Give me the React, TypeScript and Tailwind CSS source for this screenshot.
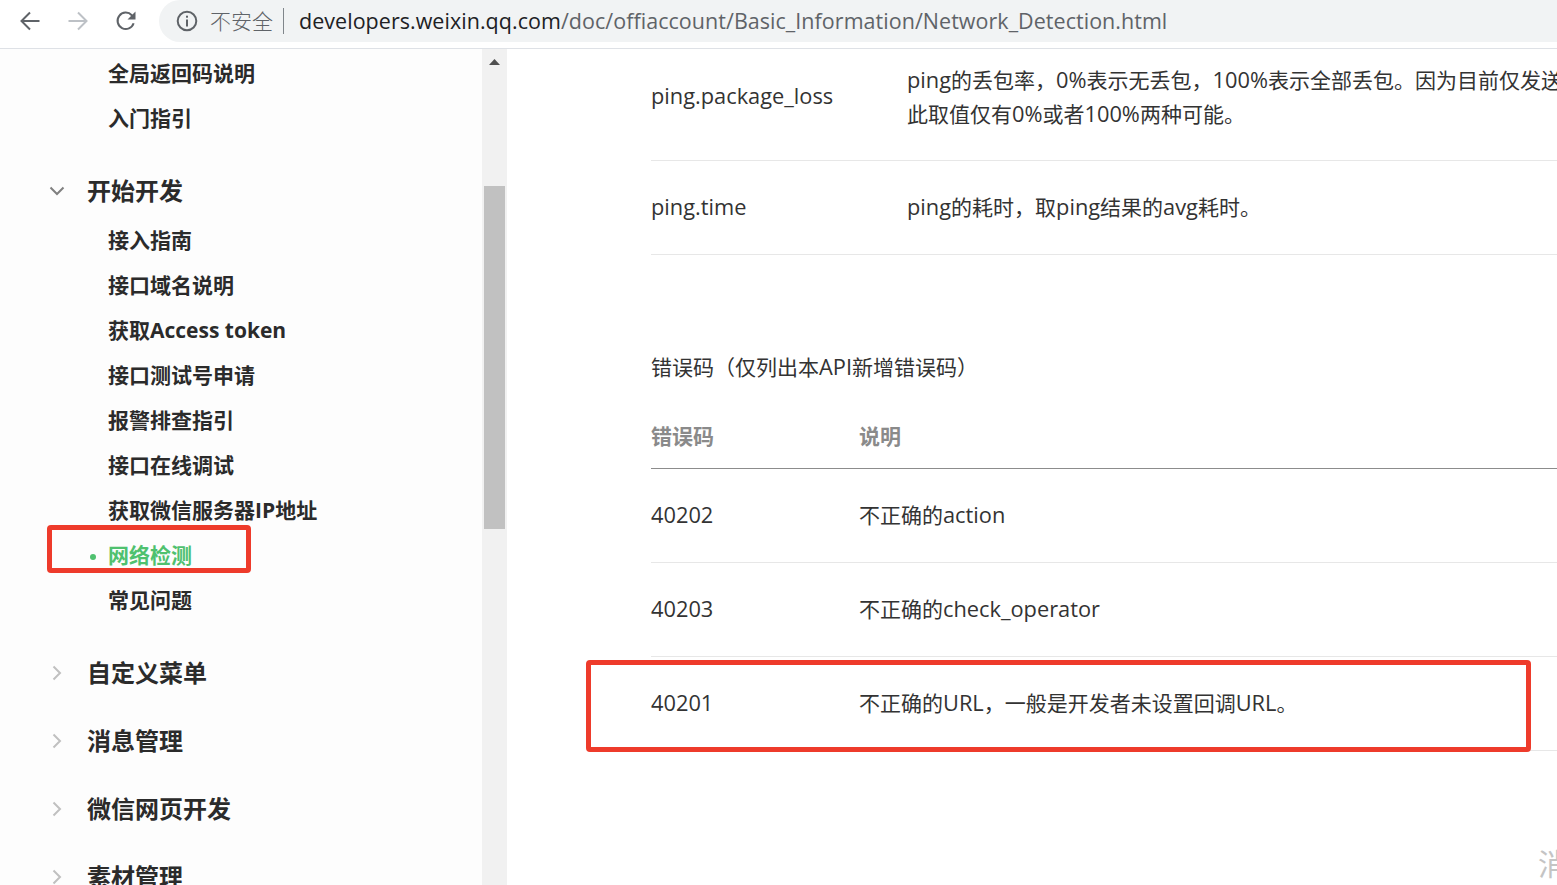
import { Fragment } from "react";

const latin = "font-['Open_Sans','Noto_Sans_CJK_SC',sans-serif]";

const topItems = ["全局返回码说明", "入门指引"];
const devItems = [
  "接入指南",
  "接口域名说明",
  "获取Access token",
  "接口测试号申请",
  "报警排查指引",
  "接口在线调试",
  "获取微信服务器IP地址",
];
const groups = ["自定义菜单", "消息管理", "微信网页开发", "素材管理"];

const errorRows = [
  { code: "40202", text: "不正确的action" },
  { code: "40203", text: "不正确的check_operator" },
  { code: "40201", text: "不正确的URL，一般是开发者未设置回调URL。" },
];

// the Latin runs sit a little larger than the CJK ones in the reference
function Mixed({ text }: { text: string }) {
  const parts = text.split(/([A-Za-z0-9_.%]+)/);
  return (
    <>
      {parts.map((p, i) =>
        i % 2 === 1 ? (
          <span key={i} className="text-[21.8px]">
            {p}
          </span>
        ) : (
          <Fragment key={i}>{p}</Fragment>
        ),
      )}
    </>
  );
}

function ToolbarIcons() {
  return (
    <div className="flex w-[159px] shrink-0 items-center">
      <svg width="24" height="24" viewBox="0 0 24 24" fill="none" className="ml-[18px] text-[#5f6368]">
        <path d="M21.5 12H3.5M12 3.5 3.5 12l8.5 8.5" stroke="currentColor" strokeWidth="2" />
      </svg>
      <svg width="24" height="24" viewBox="0 0 24 24" fill="none" className="ml-[24px] text-[#bdc1c6]">
        <path d="M2.5 12h18M12 3.5l8.5 8.5-8.5 8.5" stroke="currentColor" strokeWidth="2" />
      </svg>
      <svg width="24" height="24" viewBox="0 0 24 24" fill="none" className="ml-[24px] text-[#5f6368]">
        <path d="M19.6 14.2A8.2 8.2 0 1 1 17.8 6.2L20 8.4" stroke="currentColor" strokeWidth="2" />
        <path d="M21.5 2.5v8h-8z" fill="currentColor" />
      </svg>
    </div>
  );
}

function AddressBar() {
  return (
    <div className="flex h-[42px] flex-1 items-center rounded-l-[21px] bg-[#f1f3f4] pl-[16px]">
      <svg width="24" height="24" viewBox="0 0 24 24" fill="none" className="shrink-0 text-[#5f6368]">
        <circle cx="12" cy="12" r="9.3" stroke="currentColor" strokeWidth="2" />
        <rect x="11" y="10.5" width="2" height="7" fill="currentColor" />
        <rect x="11" y="6.7" width="2" height="2" fill="currentColor" />
      </svg>
      <span className="ml-[11px] font-['Noto_Sans_CJK_SC',sans-serif] text-[21px] font-light text-[#5f6368]">不安全</span>
      <span className="ml-[10px] h-[26px] w-px bg-[#80868b]" />
      <span className="ml-[15px] whitespace-nowrap font-['Open_Sans',sans-serif] text-[21.47px] tracking-[0.05px] text-[#202124]">
        developers.weixin.qq.com<span className="text-[#5f6368]">/doc/offiaccount/Basic_Information/Network_Detection.html</span>
      </span>
    </div>
  );
}

function Chevron({ open }: { open?: boolean }) {
  return (
    <svg width="18" height="18" viewBox="0 0 18 18" fill="none" className={`shrink-0 ${open ? "text-[#808080]" : "text-[#c0c0c0]"}`}>
      {open ? (
        <path d="M2.5 5.5 9 12l6.5-6.5" stroke="currentColor" strokeWidth="2" />
      ) : (
        <path d="M5.5 2.5 12 9l-6.5 6.5" stroke="currentColor" strokeWidth="2" />
      )}
    </svg>
  );
}

function SideItem({ label, active }: { label: string; active?: boolean }) {
  return (
    <div
      className={`relative flex h-[45px] items-center pl-[108px] text-[21px] font-bold ${
        active ? "text-[#4fc16f]" : "text-[#2b2b2b]"
      }`}
    >
      {active && <span className="absolute left-[90px] top-[21px] h-[6px] w-[6px] rounded-full bg-[#4fc16f]" />}
      {label}
    </div>
  );
}

function GroupTitle({ label, open }: { label: string; open?: boolean }) {
  return (
    <div className="flex h-[68px] items-center pl-[48px] text-[24px] font-bold text-[#2b2b2b]">
      <Chevron open={open} />
      <span className="ml-[21px]">{label}</span>
    </div>
  );
}

function Sidebar() {
  return (
    <aside className={`flex h-full w-[507px] shrink-0 ${latin}`}>
      <div className="w-[482px] overflow-hidden bg-[#fdfdfd] pt-[2px]">
        {topItems.map((t) => (
          <SideItem key={t} label={t} />
        ))}
        <div className="mt-[16px]">
          <GroupTitle label="开始开发" open />
        </div>
        <div className="-mt-[7px] mb-[16px]">
          {devItems.map((t) => (
            <SideItem key={t} label={t} />
          ))}
          <SideItem label="网络检测" active />
          <SideItem label="常见问题" />
        </div>
        {groups.map((g) => (
          <GroupTitle key={g} label={g} />
        ))}
      </div>
      <div className="flex w-[25px] flex-col bg-[#f1f1f1] px-[2px]">
        <svg width="21" height="12" viewBox="0 0 21 12" className="mt-[6px]">
          <path d="M5 10 10.5 4 16 10z" fill="#505050" />
        </svg>
        <div className="mt-[119px] h-[343px] bg-[#c1c1c1]" />
      </div>
    </aside>
  );
}

function Content() {
  return (
    <main className={`relative min-w-0 flex-1 overflow-hidden bg-white pl-[144px] text-[21px] text-[#333333] ${latin}`}>
      {/* first table, its top is scrolled away */}
      <div className="flex h-[112px] items-center border-b border-[#e7e7e7] pb-[16px] whitespace-nowrap">
        <div className="w-[256px] shrink-0">
          <Mixed text="ping.package_loss" />
        </div>
        <div className="leading-[33px]">
          <p>
            <Mixed text="ping的丢包率，0%表示无丢包，100%表示全部丢包。因为目前仅发送一个包，" />
          </p>
          <p>
            <Mixed text="此取值仅有0%或者100%两种可能。" />
          </p>
        </div>
      </div>
      <div className="flex h-[94px] items-center border-b border-[#e7e7e7] whitespace-nowrap">
        <div className="w-[256px] shrink-0">
          <Mixed text="ping.time" />
        </div>
        <div>
          <Mixed text="ping的耗时，取ping结果的avg耗时。" />
        </div>
      </div>

      <p className="mt-[95px] h-[33px] leading-[33px] whitespace-nowrap">
        <Mixed text="错误码（仅列出本API新增错误码）" />
      </p>

      <div className="mt-[21px] flex h-[65px] items-center border-b border-[#8c8c8c] pt-[1px] font-bold text-[#8a8a8a]">
        <div className="w-[208px] shrink-0">错误码</div>
        <div>说明</div>
      </div>
      {errorRows.map((r) => (
        <div key={r.code} className="flex h-[94px] items-center border-b border-[#e7e7e7] whitespace-nowrap">
          <div className="w-[208px] shrink-0">
            <Mixed text={r.code} />
          </div>
          <div>
            <Mixed text={r.text} />
          </div>
        </div>
      ))}

      <span className="absolute left-[1031px] top-[800px] text-[30px] leading-[30px] text-[#c4c4c4]">消</span>
    </main>
  );
}

export default function App() {
  return (
    <div className="relative h-[885px] w-[1557px] overflow-hidden bg-white">
      <header className="flex h-[49px] border-b border-[#dee1e6] pb-[6px]">
        <ToolbarIcons />
        <AddressBar />
      </header>
      <div className="flex h-[836px]">
        <Sidebar />
        <Content />
      </div>

      {/* red annotation boxes drawn over the screenshot */}
      <div className="absolute left-[47px] top-[525px] h-[48px] w-[204px] rounded-[4px] border-[5px] border-[#ee3b2b]" />
      <div className="absolute left-[586px] top-[660px] h-[92px] w-[945px] rounded-[4px] border-[5px] border-[#ee3b2b]" />
    </div>
  );
}
